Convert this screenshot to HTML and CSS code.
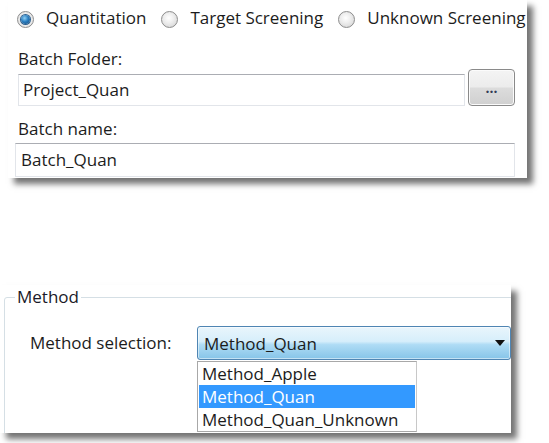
FILE: index.html
```html
<!DOCTYPE html>
<html>
<head>
<meta charset="utf-8">
<link rel="stylesheet" href="styles.css">
</head>
<body>
<div class="panel panel-top">
  <div class="radios">
    <div class="radio-item"><span class="radio checked"><span class="dot"></span></span><span class="radio-text">Quantitation</span></div>
    <div class="radio-item"><span class="radio"></span><span class="radio-text">Target Screening</span></div>
    <div class="radio-item"><span class="radio"></span><span class="radio-text">Unknown Screening</span></div>
  </div>
  <div class="label label-folder">Batch Folder:</div>
  <div class="folder-row">
    <div class="textbox tb-folder">Project_Quan</div>
    <div class="button">...</div>
  </div>
  <div class="label label-name">Batch name:</div>
  <div class="textbox tb-name">Batch_Quan</div>
</div>

<div class="panel panel-bottom">
  <fieldset class="group">
    <legend class="group-title">Method</legend>
    <div class="method-row">
      <div class="method-label">Method selection:</div>
      <div class="combo-col">
        <div class="combo"><span class="combo-text">Method_Quan</span><span class="arrow"></span></div>
        <div class="list">
          <div class="list-item">Method_Apple</div>
          <div class="list-item selected">Method_Quan</div>
          <div class="list-item">Method_Quan_Unknown</div>
        </div>
      </div>
    </div>
  </fieldset>
</div>
</body>
</html>
```

FILE: styles.css
```css
html, body {
  margin: 0;
  padding: 0;
  background: #ffffff;
}
body {
  width: 549px;
  height: 443px;
  overflow: hidden;
  font-family: "Open Sans", "Noto Sans", sans-serif;
  font-size: 17px;
  color: #1c1c1c;
}

.panel {
  background: #ffffff;
  box-sizing: border-box;
  box-shadow: 6px 6px 6px rgba(0, 0, 0, 0.55);
}

.panel-top {
  margin-left: 8px;
  width: 519px;
  height: 178px;
  padding: 7px 0 1px 9px;
}

.radios {
  display: flex;
  align-items: center;
  height: 22px;
  line-height: 22px;
  gap: 15px;
  white-space: nowrap;
}
.radio-item {
  display: flex;
  align-items: center;
  gap: 12px;
  flex-shrink: 0;
}
.radio {
  width: 17px;
  height: 17px;
  flex-shrink: 0;
  box-sizing: border-box;
  border-radius: 50%;
  border: 1px solid #8d8d8d;
  background: radial-gradient(circle at 45% 40%, #ffffff 0%, #eeeeee 40%, #cfcfcf 100%);
  display: flex;
  align-items: center;
  justify-content: center;
  margin-top: 2px;
}
.radio.checked {
  background: radial-gradient(circle at 50% 50%, #f4f4f4 0%, #e2e2e2 100%);
}
.dot {
  width: 9px;
  height: 9px;
  border-radius: 50%;
  background: radial-gradient(circle at 40% 35%, #8fd0f5 0%, #2a7ec0 45%, #10467a 100%);
  box-shadow: 0 0 0 1px #2c5f8f;
}

.label {
  line-height: 21px;
  height: 21px;
  padding-left: 1px;
}
.label-folder {
  margin-top: 19px;
}
.label-name {
  margin-top: 12px;
}

.folder-row {
  display: flex;
  align-items: flex-end;
  height: 37px;
}

.textbox {
  box-sizing: border-box;
  border: 1px solid #e2e5ea;
  border-top-color: #abadb3;
  background: #ffffff;
  white-space: nowrap;
}
.tb-folder {
  margin-left: 1px;
  width: 447px;
  height: 32px;
  line-height: 30px;
  padding-left: 4px;
}
.tb-name {
  margin-top: 4px;
  margin-left: -2px;
  width: 500px;
  height: 34px;
  line-height: 32px;
  padding-left: 5px;
}

.button {
  margin-left: 3px;
  width: 47px;
  height: 37px;
  box-sizing: border-box;
  border: 1px solid #8a8a8a;
  border-radius: 4px;
  background: linear-gradient(#f4f4f4 0%, #ececec 48%, #dcdcdc 52%, #d0d0d0 100%);
  box-shadow: inset 0 0 0 1px #fbfbfb;
  text-align: center;
  line-height: 36px;
  font-size: 14px;
  font-weight: bold;
  color: #333a55;
}

.panel-bottom {
  margin-top: 107px;
  width: 511px;
  height: 148px;
  overflow: hidden;
}

.group {
  margin: 2px 0 0 4px;
  padding: 19px 0 0 25px;
  width: 620px;
  height: 200px;
  border: 1px solid #d5dfe5;
  border-radius: 3px;
  min-inline-size: 0;
}
.group-title {
  padding: 0 2px;
  margin-left: -15px;
  line-height: 20px;
  color: #1a1a28;
}

.method-row {
  display: grid;
  grid-template-columns: 167px 314px;
  white-space: nowrap;
}
.method-label {
  height: 34px;
  line-height: 30px;
  padding-top: 2px;
  box-sizing: border-box;
}

.combo {
  height: 34px;
  box-sizing: border-box;
  border: 1px solid #4f85b3;
  border-radius: 3px;
  background: linear-gradient(#e9f5fc 0%, #d6eefb 45%, #afdcf5 55%, #86c4e8 100%);
  box-shadow: inset 0 0 0 1px rgba(255, 255, 255, 0.5);
  padding: 2px 0 0 6px;
  line-height: 30px;
  display: flex;
  align-items: center;
  justify-content: space-between;
}
.arrow {
  width: 0;
  height: 0;
  border-left: 5px solid transparent;
  border-right: 5px solid transparent;
  border-top: 6px solid #111111;
  margin-right: 5px;
  margin-top: -2px;
}

.list {
  margin-top: 1px;
  width: 220px;
  box-sizing: border-box;
  border: 1px solid #a8a8a8;
  border-right-color: #c8c8c8;
  background: #ffffff;
}
.list-item {
  height: 23px;
  line-height: 23px;
  padding-left: 4px;
}
.list-item.selected {
  background: #3399ff;
  color: #ffffff;
  margin: 0 1px;
  padding-left: 3px;
}
```
